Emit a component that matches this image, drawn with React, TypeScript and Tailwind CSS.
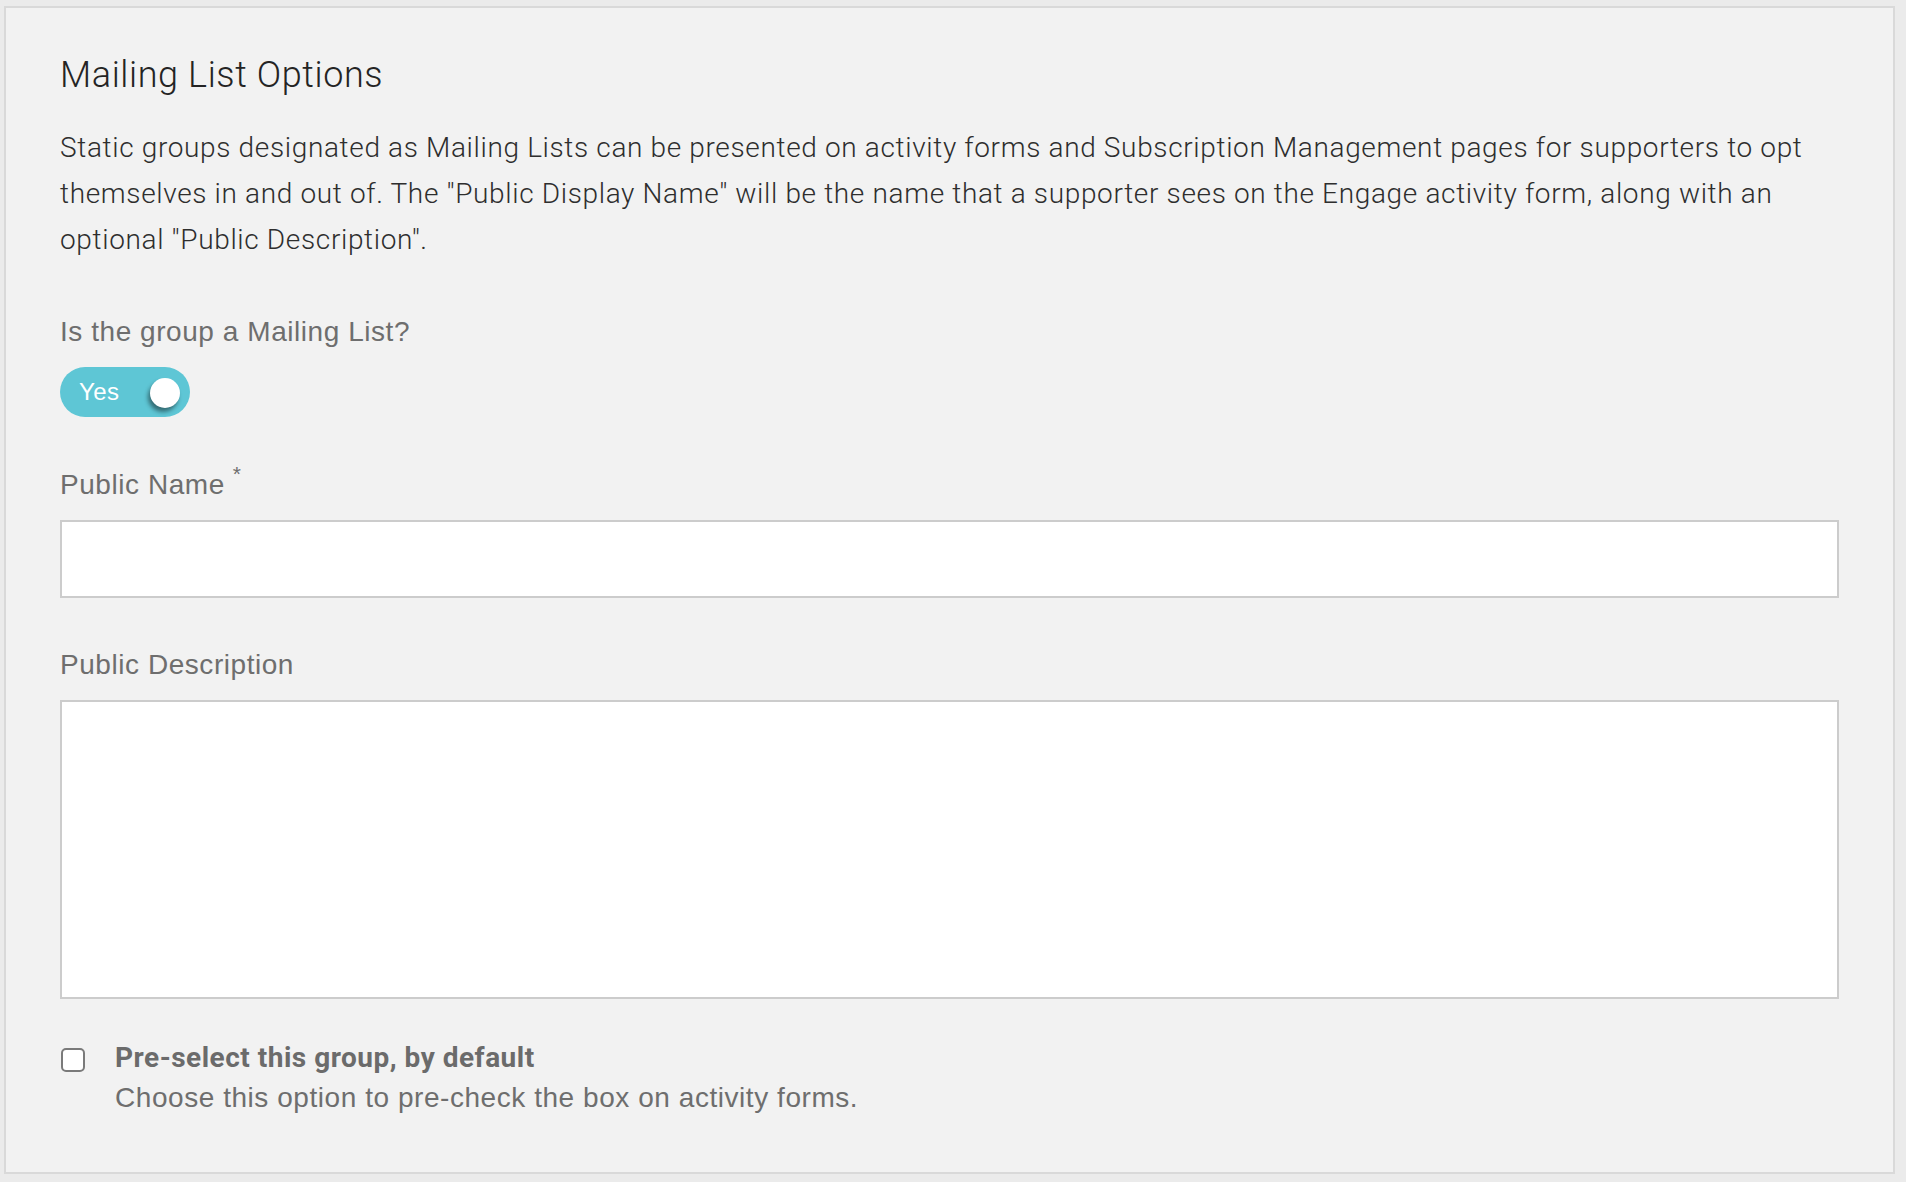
import { useState } from "react";

function Toggle({ on, onChange }: { on: boolean; onChange: (v: boolean) => void }) {
  return (
    <button
      type="button"
      onClick={() => onChange(!on)}
      className="relative flex h-[50px] w-[130px] items-center rounded-full bg-[#5ec6d5] pl-[19px] text-left font-['Liberation_Sans',Arial,sans-serif] text-[24px] leading-none tracking-[0.4px] text-white"
    >
      {on ? "Yes" : "No"}
      <span className="absolute top-[11px] left-[90px] h-[30px] w-[30px] rounded-full bg-white shadow-[-2px_4px_4px_rgba(0,0,0,0.45)]" />
    </button>
  );
}

export default function App() {
  const [isList, setIsList] = useState(true);
  const [preselect, setPreselect] = useState(false);

  return (
    <div className="min-h-screen bg-[#ebebeb] pt-[6px] pl-[4px]">
      <section className="h-[1168px] w-[1891px] border-2 border-[#d9d9d9] bg-[#f2f2f2] pt-[45px] pr-[54px] pl-[54px]">
        <h2 className="font-['Roboto',sans-serif] text-[36px] leading-[44px] font-light tracking-[0.6px] text-[#242424]">
          Mailing List Options
        </h2>
        <p className="mt-[28px] font-['Roboto',sans-serif] text-[28px] leading-[46px] font-light tracking-[0.65px] text-[#2e2e2e]">
          Static groups designated as Mailing Lists can be presented on activity forms and Subscription Management pages
          for supporters to opt themselves in and out of. The "Public Display Name" will be the name that a supporter
          sees on the Engage activity form, along with an optional "Public Description".
        </p>

        <div className="font-['Liberation_Sans',Arial,sans-serif] text-[28px] leading-[36px] tracking-[0.55px] text-[#6e6e6e]">
          <div className="mt-[51px]">Is the group a Mailing List?</div>
          <div className="mt-[17px]">
            <Toggle on={isList} onChange={setIsList} />
          </div>

          <label className="mt-[50px] block h-[36px]">
            Public Name
            <span className="relative -top-[13px] ml-[8px] text-[21px] leading-none">*</span>
          </label>
          <input
            type="text"
            className="mt-[17px] block h-[78px] w-full border-2 border-[#cccccc] bg-white px-4 outline-none"
          />

          <label className="mt-[49px] block">Public Description</label>
          <textarea className="mt-[17px] block h-[299px] w-full resize-none border-2 border-[#cccccc] bg-white p-4 outline-none" />

          <div className="mt-[42px] flex gap-[30px]">
            <button
              type="button"
              onClick={() => setPreselect(!preselect)}
              className="mt-[7px] ml-[1px] flex h-[24px] w-[24px] shrink-0 items-center justify-center rounded-[5px] border-2 border-[#7a7a7a] bg-white"
            >
              {preselect && <span className="h-[12px] w-[12px] rounded-[2px] bg-[#5ec6d5]" />}
            </button>
            <div>
              <div className="font-['Roboto',sans-serif] text-[28px] leading-[34px] font-bold tracking-[0.5px] text-[#6b6b6b]">
                Pre-select this group, by default
              </div>
              <div className="mt-[5px]">Choose this option to pre-check the box on activity forms.</div>
            </div>
          </div>
        </div>
      </section>
    </div>
  );
}
